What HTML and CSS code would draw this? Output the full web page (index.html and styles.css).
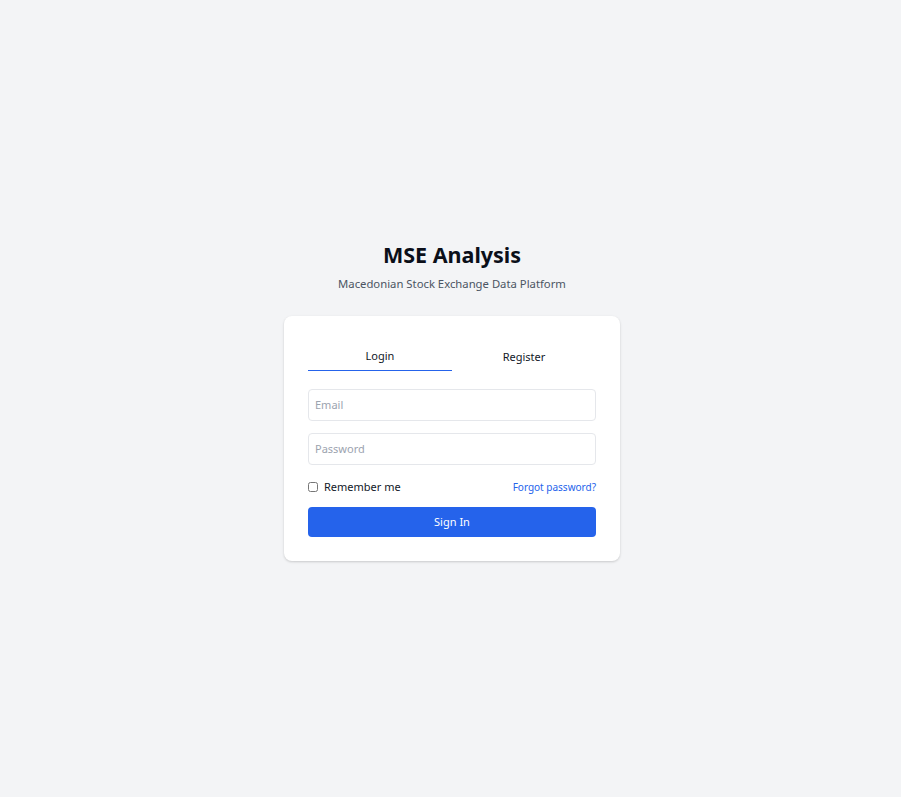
FILE: index.html
```html
<!DOCTYPE html>
<html lang="en">
<head>
<meta charset="utf-8">
<title>MSE Analysis</title>
<link rel="stylesheet" href="styles.css">
</head>
<body>
<main class="page">
  <div class="wrap">
    <header class="head">
      <h1 class="title">MSE Analysis</h1>
      <p class="subtitle">Macedonian Stock Exchange Data Platform</p>
    </header>
    <section class="card">
      <div class="tabs">
        <button class="tab active">Login</button>
        <button class="tab">Register</button>
      </div>
      <form class="form">
        <input class="field" type="email" placeholder="Email">
        <input class="field" type="password" placeholder="Password">
        <div class="row">
          <label class="remember"><input type="checkbox" class="check"> Remember me</label>
          <a class="forgot" href="#">Forgot password?</a>
        </div>
        <button type="button" class="submit">Sign In</button>
      </form>
    </section>
  </div>
</main>
</body>
</html>
```
FILE: styles.css
```css
* { box-sizing: border-box; }
html, body { margin: 0; padding: 0; }
body {
  background: #f3f4f6;
  font-family: "Noto Sans", "Open Sans", sans-serif;
  color: #111827;
}
.page {
  min-height: 100vh;
  display: flex;
  align-items: center;
  justify-content: center;
  padding-left: 3px;
}
.wrap {
  width: 336px;
  display: flex;
  flex-direction: column;
  margin-top: 3px;
}
.head {
  text-align: center;
  margin-bottom: 24px;
}
.title {
  margin: 0;
  font-size: 21.5px;
  line-height: 30px;
  font-weight: 700;
  color: #0b0f19;
}
.subtitle {
  margin: 6px 0 0;
  font-size: 11.3px;
  line-height: 16px;
  color: #4b5563;
}
.card {
  background: #fff;
  border-radius: 8px;
  box-shadow: 0 1px 3px rgba(0,0,0,0.12), 0 1px 2px rgba(0,0,0,0.06);
  padding: 24px;
}
.tabs {
  display: flex;
  margin-bottom: 18px;
}
.tab {
  flex: 1;
  border: 0;
  background: none;
  font-family: inherit;
  font-size: 11px;
  color: #111827;
  height: 31px;
  padding: 4px 0 0;
  border-bottom: 1px solid transparent;
  cursor: pointer;
}
.tab.active {
  border-bottom-color: #2563eb;
  padding-top: 2px;
}
.form {
  display: flex;
  flex-direction: column;
}
.field {
  height: 32px;
  border: 1px solid #e5e7eb;
  border-radius: 4px;
  padding: 0 6px;
  font-family: inherit;
  font-size: 11px;
  color: #111827;
  margin-bottom: 12px;
  outline: none;
}
.field::placeholder { color: #9ca3af; }
.row {
  display: flex;
  align-items: center;
  justify-content: space-between;
  height: 18px;
  padding-top: 2px;
  margin-bottom: 12px;
}
.remember {
  display: flex;
  align-items: center;
  gap: 6px;
  font-size: 11px;
  color: #111827;
}
.check {
  margin: 0;
  width: 10px;
  height: 10px;
}
.forgot {
  font-size: 10px;
  color: #2563eb;
  text-decoration: none;
}
.submit {
  height: 30px;
  border: 0;
  border-radius: 4px;
  background: #2563eb;
  color: #fff;
  font-family: inherit;
  font-size: 11px;
  cursor: pointer;
}
```
